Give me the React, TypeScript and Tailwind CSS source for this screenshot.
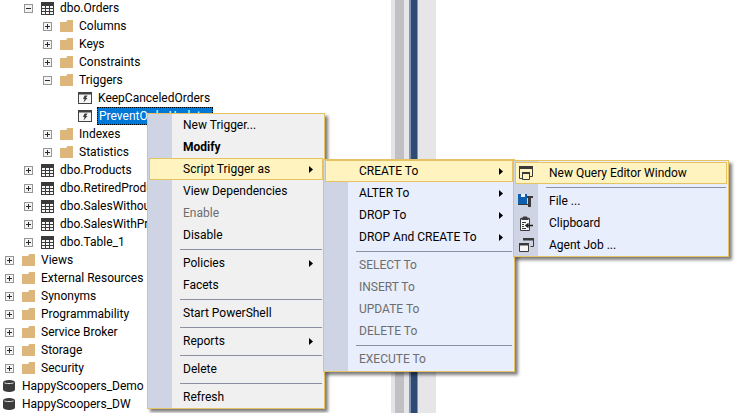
const FONT = "font-['Roboto','Open_Sans',sans-serif]"

type Kind = 'folder' | 'table' | 'trigger' | 'db'

type TreeRow = {
  label: string
  kind: Kind
  level: 0 | 1 | 2 | 3 | 4
  toggle?: 'plus' | 'minus'
  selected?: boolean
}

const TREE: TreeRow[] = [
  { label: 'dbo.Orders', kind: 'table', level: 2, toggle: 'minus' },
  { label: 'Columns', kind: 'folder', level: 3, toggle: 'plus' },
  { label: 'Keys', kind: 'folder', level: 3, toggle: 'plus' },
  { label: 'Constraints', kind: 'folder', level: 3, toggle: 'plus' },
  { label: 'Triggers', kind: 'folder', level: 3, toggle: 'minus' },
  { label: 'KeepCanceledOrders', kind: 'trigger', level: 4 },
  { label: 'PreventOrderUpdate', kind: 'trigger', level: 4, selected: true },
  { label: 'Indexes', kind: 'folder', level: 3, toggle: 'plus' },
  { label: 'Statistics', kind: 'folder', level: 3, toggle: 'plus' },
  { label: 'dbo.Products', kind: 'table', level: 2, toggle: 'plus' },
  { label: 'dbo.RetiredProducts', kind: 'table', level: 2, toggle: 'plus' },
  { label: 'dbo.SalesWithoutPromo', kind: 'table', level: 2, toggle: 'plus' },
  { label: 'dbo.SalesWithPromo', kind: 'table', level: 2, toggle: 'plus' },
  { label: 'dbo.Table_1', kind: 'table', level: 2, toggle: 'plus' },
  { label: 'Views', kind: 'folder', level: 1, toggle: 'plus' },
  { label: 'External Resources', kind: 'folder', level: 1, toggle: 'plus' },
  { label: 'Synonyms', kind: 'folder', level: 1, toggle: 'plus' },
  { label: 'Programmability', kind: 'folder', level: 1, toggle: 'plus' },
  { label: 'Service Broker', kind: 'folder', level: 1, toggle: 'plus' },
  { label: 'Storage', kind: 'folder', level: 1, toggle: 'plus' },
  { label: 'Security', kind: 'folder', level: 1, toggle: 'plus' },
  { label: 'HappyScoopers_Demo', kind: 'db', level: 0 },
  { label: 'HappyScoopers_DW', kind: 'db', level: 0 },
]

const LEVEL_PADDING = {
  0: 'pl-[3px]',
  1: 'pl-[5px]',
  2: 'pl-[24px]',
  3: 'pl-[43px]',
  4: 'pl-[78px]',
}

function Toggle({ type }: { type: 'plus' | 'minus' }) {
  return (
    <svg width="9" height="9" viewBox="0 0 9 9" className="shrink-0">
      <rect x="0.5" y="0.5" width="8" height="8" fill="#f4f4f4" stroke="#969696" />
      <path d="M2 4.5h5" stroke="#2a2a2a" />
      {type === 'plus' && <path d="M4.5 2v5" stroke="#2a2a2a" />}
    </svg>
  )
}

function NodeIcon({ kind }: { kind: Kind }) {
  if (kind === 'folder') {
    return (
      <svg width="13" height="12" viewBox="0 0 13 12" className="shrink-0">
        <path d="M0 2h6l1.500-2H13v12H0z" fill="#dcb67a" />
      </svg>
    )
  }
  if (kind === 'table') {
    return (
      <svg width="13" height="13" viewBox="0 0 13 13" className="shrink-0">
        <path d="M0 0h13v13H0z" fill="#3a3a3a" />
        <path
          d="M1 4h3v2H1zM5 4h3v2H5zM9 4h3v2H9zM1 7h3v2H1zM5 7h3v2H5zM9 7h3v2H9zM1 10h3v2H1zM5 10h3v2H5zM9 10h3v2H9z"
          fill="#f6f6f6"
        />
      </svg>
    )
  }
  if (kind === 'trigger') {
    return (
      <svg width="14" height="12" viewBox="0 0 14 12" className="shrink-0">
        <rect x="0.5" y="0.5" width="13" height="11" fill="#f6f6f6" stroke="#424242" />
        <path d="M0 0h14v2.500H0z" fill="#424242" />
        <path d="M6.500 3.500h3L8 6h1.500L5.500 10.500 6.500 7H5z" fill="#424242" />
      </svg>
    )
  }
  return (
    <svg width="12" height="12" viewBox="0 0 12 12" className="shrink-0">
      <path d="M0 2.500C0 1 2.500 0 6 0s6 1 6 2.500v7C12 11 9.500 12 6 12s-6-1-6-2.500z" fill="#3c3c3c" />
      <path d="M1.500 2.800C2.500 3.800 9.500 3.800 10.500 2.800" stroke="#e8e8e8" fill="none" />
    </svg>
  )
}

function Tree() {
  return (
    <div className="-mt-px w-[391px] shrink-0 overflow-hidden">
      {TREE.map((row) => (
        <div key={row.label} className={`flex h-[18px] items-center ${LEVEL_PADDING[row.level]}`}>
          {row.toggle && (
            <span className="mr-[8px] flex w-[9px] justify-center">
              <Toggle type={row.toggle} />
            </span>
          )}
          <NodeIcon kind={row.kind} />
          <span
            className={
              row.selected
                ? 'ml-[5px] flex h-[18px] w-[116px] items-center border border-dotted border-black bg-[#0078d7] pl-[1px] text-white'
                : row.kind === 'db'
                  ? 'ml-[7px] whitespace-nowrap'
                  : 'ml-[6px] whitespace-nowrap'
            }
          >
            {row.label}
          </span>
        </div>
      ))}
    </div>
  )
}

function Splitter() {
  return (
    <div className="flex h-[413px] w-[45px] shrink-0">
      <div className="w-[4px] bg-[#e4e4e8]" />
      <div className="w-[9px] bg-[#c0c0c4]" />
      <div className="w-[5px] bg-[#e6e6e8]" />
      <div className="w-[2px] bg-[#7f95bc]" />
      <div className="w-[6px] bg-[#2f4a73]" />
      <div className="w-[1px] bg-[#7f95bc]" />
      <div className="w-[18px] bg-[#e6e6e8]" />
    </div>
  )
}

type MenuRow = {
  label?: string
  sub?: boolean
  bold?: boolean
  disabled?: boolean
  hot?: boolean
  icon?: React.ReactNode
}

const SEP: MenuRow = {}

const CONTEXT_MENU: MenuRow[] = [
  { label: 'New Trigger...' },
  { label: 'Modify', bold: true },
  { label: 'Script Trigger as', sub: true, hot: true },
  { label: 'View Dependencies' },
  { label: 'Enable', disabled: true },
  { label: 'Disable' },
  SEP,
  { label: 'Policies', sub: true },
  { label: 'Facets' },
  SEP,
  { label: 'Start PowerShell' },
  SEP,
  { label: 'Reports', sub: true },
  SEP,
  { label: 'Delete' },
  SEP,
  { label: 'Refresh' },
]

const SCRIPT_MENU: MenuRow[] = [
  { label: 'CREATE To', sub: true, hot: true },
  { label: 'ALTER To', sub: true },
  { label: 'DROP To', sub: true },
  { label: 'DROP And CREATE To', sub: true },
  SEP,
  { label: 'SELECT To', disabled: true },
  { label: 'INSERT To', disabled: true },
  { label: 'UPDATE To', disabled: true },
  { label: 'DELETE To', disabled: true },
  SEP,
  { label: 'EXECUTE To', disabled: true },
]

function QueryWindowIcon() {
  return (
    <svg width="14" height="14" viewBox="0 0 14 14">
      <path d="M0.500 0.500h13v10h-3M3 12.500H0.500v-12" fill="none" stroke="#3a3a3a" />
      <path d="M0 0h14v3H0z" fill="#3a3a3a" />
      <path d="M3.500 6.500h7v7h-7z" fill="#fff3bf" stroke="#3a3a3a" />
      <path d="M3 6h8v2H3z" fill="#3a3a3a" />
    </svg>
  )
}

function FileIcon() {
  return (
    <svg width="16" height="15" viewBox="0 0 16 15">
      <path d="M0 0h9v10H0z" fill="#0e5fb0" />
      <path d="M3 0h4v3H3z" fill="#e8eefc" />
      <path d="M9 2h6v2h-2v9h-3v-2H0v-1h10V4H9z" fill="#3a3a3a" />
    </svg>
  )
}

function ClipboardIcon() {
  return (
    <svg width="14" height="15" viewBox="0 0 14 15">
      <path d="M1.500 2.500h9v12h-9z" fill="#f6f6f6" stroke="#3a3a3a" />
      <path d="M4 0.500h4v1h1.500v2.500h-7v-2.500H4z" fill="#3a3a3a" />
      <path d="M3 6.500h4M3 8.500h2M3 10.500h2M3 12.500h4" stroke="#3a3a3a" />
      <path d="M14 9.500H7M9.500 7.500l-2.500 2 2.500 2" stroke="#1e1e1e" strokeWidth="1.500" fill="none" />
    </svg>
  )
}

function AgentJobIcon() {
  return (
    <svg width="15" height="14" viewBox="0 0 15 14">
      <path d="M4.500 0.500h10v8h-3" fill="none" stroke="#3a3a3a" />
      <path d="M4 0h11v2.500H4z" fill="#3a3a3a" />
      <path d="M0.500 5.500h9v8h-9z" fill="#f6f6f6" stroke="#3a3a3a" />
      <path d="M0 5h10v2.500H0z" fill="#3a3a3a" />
    </svg>
  )
}

const ACTION_MENU: MenuRow[] = [
  { label: 'New Query Editor Window', hot: true, icon: <QueryWindowIcon /> },
  SEP,
  { label: 'File ...', icon: <FileIcon /> },
  { label: 'Clipboard', icon: <ClipboardIcon /> },
  { label: 'Agent Job ...', icon: <AgentJobIcon /> },
]

function MenuList({ rows }: { rows: MenuRow[] }) {
  return (
    <>
      {rows.map((row, i) =>
        row.label ? (
          <div
            key={row.label}
            className={`relative mx-px flex h-[22px] items-center justify-between border pr-[9px] pl-[33px] ${
              row.hot ? 'border-[#e5c365] bg-[#fff3bf]' : 'border-transparent'
            } ${row.disabled ? 'text-[#6d6d6d]' : ''} ${row.bold ? 'font-bold' : ''}`}
          >
            {row.icon && (
              <span className="absolute top-1/2 left-[2px] flex h-4 w-4 -translate-y-1/2 items-center justify-center">
                {row.icon}
              </span>
            )}
            <span className="whitespace-nowrap">{row.label}</span>
            {row.sub && (
              <svg width="4" height="7" viewBox="0 0 4 7">
                <path d="M0 0l4 3.500-4 3.500z" fill="#000" />
              </svg>
            )}
          </div>
        ) : (
          <div key={i} className="mr-[2px] ml-[32px] flex h-[6px] items-center">
            <div className="h-px w-full bg-[#8a8fa3]" />
          </div>
        ),
      )}
    </>
  )
}

export default function App() {
  return (
    <div className={`relative flex h-[413px] w-[736px] overflow-hidden bg-white text-[12px] leading-none text-black ${FONT}`}>
      <Tree />
      <Splitter />

      <div className="absolute top-[113px] left-[147px] z-10 w-[178px] border border-[#e5c365] bg-[linear-gradient(to_right,#ced4e4_24px,#f0f0f0_24px)] shadow-[3px_3px_3px_rgba(0,0,0,0.5)]">
        <MenuList rows={CONTEXT_MENU} />
      </div>
      <div className="absolute top-[159px] left-[323px] z-20 w-[192px] border border-[#e5c365] bg-[linear-gradient(to_right,#ced4e4_24px,#e8eefc_24px)] pb-px shadow-[3px_3px_3px_rgba(0,0,0,0.5)]">
        <MenuList rows={SCRIPT_MENU} />
      </div>
      <div className="absolute top-[160px] left-[513px] z-30 w-[216px] border border-[#e5c365] bg-[linear-gradient(to_right,#ced4e4_24px,#e8eefc_24px)] pt-px shadow-[3px_3px_3px_rgba(0,0,0,0.5)]">
        <MenuList rows={ACTION_MENU} />
      </div>
    </div>
  )
}
